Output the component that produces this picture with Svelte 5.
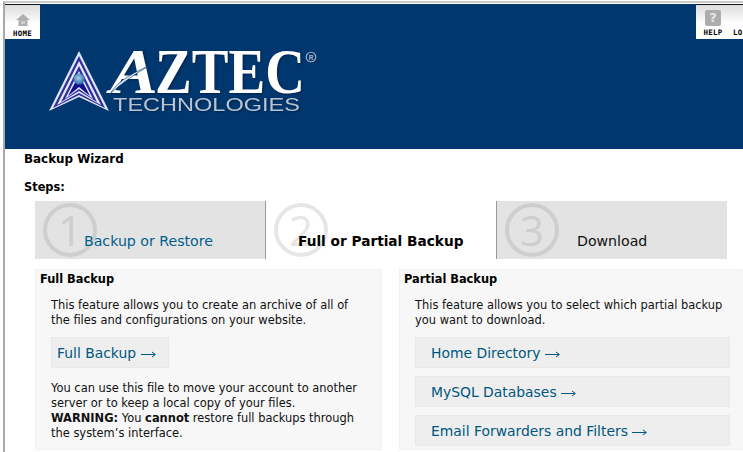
<script>
  const steps = [
    { n: '1', label: 'Backup or Restore', cls: 'done' },
    { n: '2', label: 'Full or Partial Backup', cls: 'current' },
    { n: '3', label: 'Download', cls: 'next' }
  ];
  const partial = ['Home Directory', 'MySQL Databases', 'Email Forwarders and Filters'];
</script>

{#snippet arrow()}
  <svg class="arrow" width="15" height="7" viewBox="0 0 15 7"><path d="M0 3.5h14M11 1l3.4 2.5L11 6" fill="none" stroke="currentColor" stroke-width="1"/></svg>
{/snippet}

<div class="page">
  <header class="banner">
    <div class="toolbar">
      <div class="tile home">
        <svg class="glyph" width="16" height="14" viewBox="0 0 16 14"><path d="M8 1 1 7h2.5v6h9V7H15z" fill="#b0b0b0"/><rect x="6" y="8" width="4" height="3" fill="#cfcfcf"/></svg>
        <span class="tile-label">HOME</span>
      </div>
      <div class="tile right">
        <div class="help-item">
          <span class="help-box">?</span>
          <span class="tile-label">HELP</span>
        </div>
        <span class="tile-label lo">LO</span>
      </div>
    </div>
    <svg class="logo" width="280" height="70" viewBox="0 0 280 70">
      <defs>
        <radialGradient id="globe" cx="45%" cy="40%" r="60%"><stop offset="0" stop-color="#a9cde8"/><stop offset="1" stop-color="#2a6cae"/></radialGradient>
      </defs>
      <path d="M34 2 4 62 34 48l30 14z" fill="#dfe3f2"/>
      <path d="M34 7 8 59 34 46l26 13z" fill="#2d2f9c"/>
      <path d="M34 12 12 56 34 44l22 12z" fill="#e6e8f6"/>
      <path d="M34 17 16 53 34 42l18 11z" fill="#2d2f9c"/>
      <path d="M34 22 20 50 34 40l14 10z" fill="#dfe3f2"/>
      <path d="M34 26 23 47 34 38l11 9z" fill="#12128c"/>
      <circle cx="34" cy="30" r="5.5" fill="url(#globe)"/>
      <g class="shadow">
        <text class="az" x="65" y="44" textLength="48" lengthAdjust="spacingAndGlyphs">A</text>
        <text class="zt" x="110" y="44" textLength="150" lengthAdjust="spacingAndGlyphs">ZTEC</text>
        <text class="tech" x="68" y="62" textLength="187" lengthAdjust="spacingAndGlyphs">TECHNOLOGIES</text>
      </g>
      <path d="M64 46C74 30 92 22 104 17 90 25 78 33 64 46z" fill="#dfe6ef" stroke="#00376f" stroke-width=".6"/>
      <circle cx="266" cy="8" r="4.8" fill="none" stroke="#a9b4c6" stroke-width="1.1"/>
      <text class="reg" x="266" y="10.5" text-anchor="middle">R</text>
    </svg>
  </header>

  <main class="content">
    <h1>Backup Wizard</h1>
    <h2>Steps:</h2>
    <div class="tabs">
      {#each steps as s}
        <div class="tab {s.cls}">
          <span class="ring"><span class="digit">{s.n}</span></span>
          <span class="tab-label">{s.label}</span>
        </div>
      {/each}
    </div>

    <div class="panels">
      <section class="panel">
        <h3>Full Backup</h3>
        <div class="inner">
          <p>This feature allows you to create an archive of all of the files and configurations on your website.</p>
          <a class="btn small">Full Backup {@render arrow()}</a>
          <p class="foot">You can use this file to move your account to another server or to keep a local copy of your files.<br /><b>WARNING:</b> You <b>cannot</b> restore full backups through the system’s interface.</p>
        </div>
      </section>
      <section class="panel wide">
        <h3>Partial Backup</h3>
        <div class="inner">
          <p>This feature allows you to select which partial backup you want to download.</p>
          {#each partial as p}
            <a class="btn indent">{p} {@render arrow()}</a>
          {/each}
        </div>
      </section>
    </div>
  </main>
</div>

<style>
  :global(body) { margin: 0; background: #fff; overflow: hidden; }
  .page {
    width: 738px; height: 449px; margin: 1px 0 0 3px;
    border-top: 2px solid #c8c8c8; border-left: 2px solid #a8a8a8;
    padding-top: 1px; overflow: hidden;
    font-family: "DejaVu Sans", Verdana, sans-serif; color: #000;
  }
  .banner { background: #00376f; height: 145px; }
  .toolbar { display: flex; justify-content: space-between; align-items: flex-start; }
  .tile {
    height: 34px; width: 35px; background: linear-gradient(#dcdcdc 0, #ffffff 55%);
    border-top: 1px solid #111; display: flex; flex-direction: column; align-items: center;
  }
  .glyph { margin-top: 8px; }
  .tile-label { font: 700 7.4px/8px "DejaVu Sans Mono", monospace; margin-top: 3px; letter-spacing: .3px; }
  .tile.right { width: 47px; flex-direction: row; align-items: flex-start; overflow: hidden; }
  .help-item { width: 34px; display: flex; flex-direction: column; align-items: center; flex: none; }
  .help-box {
    width: 16px; height: 16px; margin-top: 5px; border-radius: 2px; background: #adadad; color: #e6e6e6;
    font: 700 13px/16px "DejaVu Sans", sans-serif; text-align: center;
  }
  .help-box + .tile-label { margin-top: 3px; }
  .lo { margin-top: 24px; margin-left: 3px; }
  .logo { display: block; margin: 10px 0 0 40px; }
  .shadow { filter: drop-shadow(1.5px 1.5px 1px #00234a); }
  .az { font: 700 italic 64px "Liberation Serif", serif; fill: #fff; }
  .zt { font: 700 64px "Liberation Serif", serif; fill: #fff; }
  .tech { font: 400 18px "Liberation Sans", sans-serif; fill: #b9c4d2; }
  .reg { font: 700 6.5px "Liberation Sans", sans-serif; fill: #a9b4c6; }
  .content { padding-left: 19px; }
  h1 { margin: 0; padding-top: 3px; font-size: 11.9px; line-height: 15px; font-weight: 700; }
  h2 { margin: 13px 0 0; font-size: 11.4px; line-height: 15px; font-weight: 700; }
  .tabs { display: flex; margin: 6px 0 0 11px; width: 692px; height: 58px; }
  .tab { flex: 1; position: relative; background: #e3e3e3; font-size: 14.15px; display: flex; overflow: hidden; }
  .done { border-right: 1px solid #999; color: #00608c; }
  .current { background: #fff; font-weight: 700; font-size: 13.7px; }
  .next { border-left: 1px solid #999; color: #111; }
  .ring {
    position: absolute; left: 8px; top: 2px; width: 46px; height: 46px; border: 4px solid #cecece;
    border-radius: 50%; display: flex; align-items: center; justify-content: center;
  }
  .current .ring { border-color: #e6e6e6; }
  .digit { font: 400 42px/46px "Open Sans", sans-serif; color: #cecece; }
  .current .digit { color: #e6e6e6; }
  .tab-label { position: absolute; top: 31px; line-height: 18px; white-space: nowrap; }
  .done .tab-label { left: 49px; }
  .current .tab-label { left: 32px; }
  .next .tab-label { left: 80px; }
  .panels { display: flex; gap: 17px; margin: 10px 0 0 11px; width: 730px; }
  .panel { flex: 0 0 347px; box-sizing: border-box; height: 181px; background: #f7f7f7; border: 1px dotted #ececec; padding: 2px 4px; }
  .panel.wide { flex-basis: 360px; }
  h3 { margin: 0; font-size: 11.4px; line-height: 15px; font-weight: 700; }
  .inner { padding: 11px 0 0 11px; }
  p { margin: 0; max-width: 315px; font-size: 11.45px; line-height: 15px; color: #111; }
  .btn {
    display: block; box-sizing: border-box; height: 31px; margin-top: 9px; background: #eee; border: 1px solid #e8e8e8;
    color: #00577f; font-size: 13.9px; line-height: 31px; padding-left: 5px;
  }
  .arrow { vertical-align: 0; }
  .btn.small { width: 118px; }
  .btn.indent { width: 315px; padding-left: 15px; margin-top: 8px; }
  p + .btn.indent { margin-top: 9px; }
  .foot { margin-top: 13px; }
  b { font-weight: 700; }
</style>
